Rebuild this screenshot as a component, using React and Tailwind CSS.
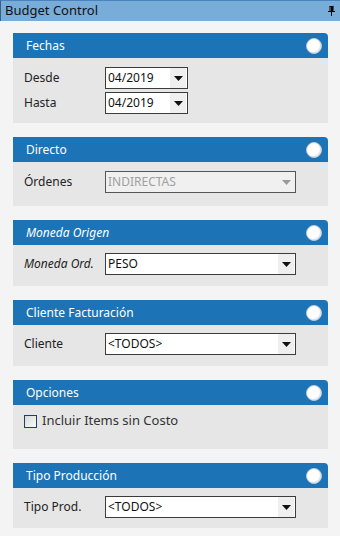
const font = { fontFamily: '"Noto Sans", "Open Sans", sans-serif' };

function Arrow({ disabled }) {
  return (
    <span className={`flex w-[16px] h-full items-center justify-center ${disabled ? '' : 'bg-[#efefef]'}`}>
      <svg width="9" height="5" viewBox="0 0 9 5">
        <path d="M0 0 H9 L4.5 5 Z" fill={disabled ? '#9a9a9a' : '#111'} />
      </svg>
    </span>
  );
}

function Select({ value, width = 'w-[83px]', disabled }) {
  return (
    <div
      className={`${width} h-[22px] flex items-center border pl-[2px] pr-[1px] ${
        disabled ? 'bg-[#f0f0f0] border-[#555] text-[#a0a0a0]' : 'bg-white border-[#3c3c3c] text-[#111]'
      }`}
    >
      <span className="flex-1 text-[12px] leading-none">{value}</span>
      <Arrow disabled={disabled} />
    </div>
  );
}

function Panel({ title, italic, children, body }) {
  return (
    <div className="w-[315px] ml-[13px]">
      <div className="h-[25px] bg-[#1c74b6] rounded-tr-[4px] flex items-center pl-[13px] pr-[6px]">
        <span className={`flex-1 text-white text-[12px] ${italic ? 'italic' : ''}`}>{title}</span>
        <span className="w-[16px] h-[16px] rounded-full bg-white border border-[#b9c9da] shadow-[inset_-1px_-1px_1px_#d9e2ec]" />
      </div>
      <div className={`bg-[#e6e6e6] pl-[11px] ${body}`}>{children}</div>
    </div>
  );
}

function Row({ label, italic, children }) {
  return (
    <div className="flex items-center">
      <span className={`w-[81px] text-[12px] text-[#222] ${italic ? 'italic' : ''}`}>{label}</span>
      {children}
    </div>
  );
}

export default function App() {
  return (
    <div className="w-[340px] h-[536px] bg-[#f4f4f4] overflow-hidden" style={font}>
      <div className="h-[21px] bg-[#78acd9] border-t border-[#4a84bf] border-l border-l-[#3a5f85] flex items-center pl-[4px] pr-[5px]">
        <span className="flex-1 text-[13px] text-[#111]">Budget Control</span>
        <svg width="7" height="10" viewBox="0 0 7 10">
          <path d="M1.5 0.5 H5.5 M2 0.5 V5 M5 0.5 V5 M0 5.5 H7 M3.5 5.5 V10" stroke="#000" strokeWidth="1" fill="none" />
          <rect x="3" y="1" width="2" height="4" fill="#000" />
        </svg>
      </div>

      <div className="flex flex-col pt-[12px] gap-[14px]">
        <Panel title="Fechas" body="pt-[9px] pb-[9px] flex flex-col gap-[3px]">
          <Row label="Desde">
            <Select value="04/2019" />
          </Row>
          <Row label="Hasta">
            <Select value="04/2019" />
          </Row>
        </Panel>

        <Panel title="Directo" body="pt-[9px] pb-[13px]">
          <Row label="Órdenes">
            <Select value="INDIRECTAS" width="w-[191px]" disabled />
          </Row>
        </Panel>

        <Panel title="Moneda Origen" italic body="pt-[8px] pb-[11px]">
          <Row label="Moneda Ord." italic>
            <Select value="PESO" width="w-[191px]" />
          </Row>
        </Panel>

        <Panel title="Cliente Facturación" body="pt-[8px] pb-[11px]">
          <Row label="Cliente">
            <Select value="<TODOS>" width="w-[191px]" />
          </Row>
        </Panel>

        <Panel title="Opciones" body="pt-[7px] pb-[19px]">
          <label className="flex items-center gap-[5px] h-[18px]">
            <span className="w-[13px] h-[13px] border border-[#1f3f66] bg-gradient-to-br from-[#d8d8d8] to-[#fbfbfb]" />
            <span className="text-[13px] text-[#333]">Incluir Items sin Costo</span>
          </label>
        </Panel>

        <Panel title="Tipo Producción" body="pt-[8px] pb-[10px]">
          <Row label="Tipo Prod.">
            <Select value="<TODOS>" width="w-[191px]" />
          </Row>
        </Panel>
      </div>
    </div>
  );
}
